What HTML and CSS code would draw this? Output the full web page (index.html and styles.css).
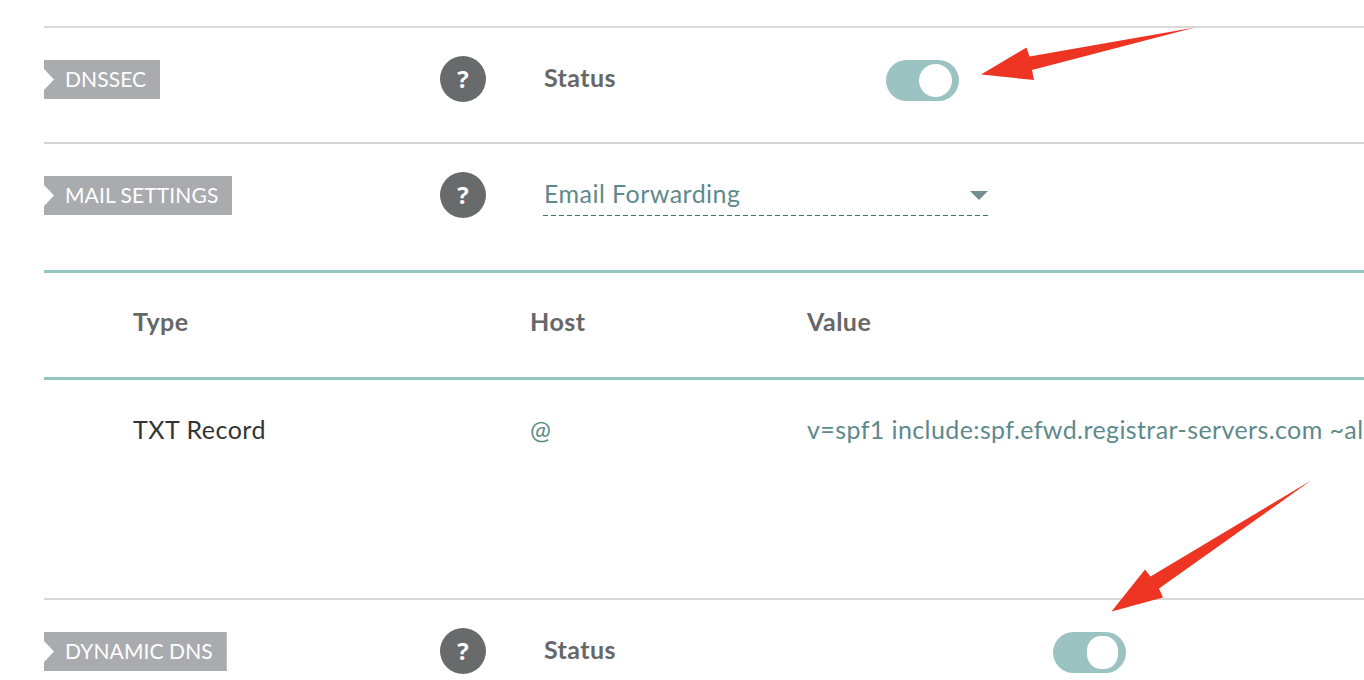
FILE: index.html
```html
<!DOCTYPE html>
<html lang="en">
<head>
<meta charset="utf-8">
<title>Advanced DNS</title>
<link rel="stylesheet" href="styles.css">
</head>
<body>
<main class="page">
  <section class="row row-dnssec">
    <div class="label-col"><span class="tag">DNSSEC</span></div>
    <span class="help">?</span>
    <div class="status-field status-a"><strong class="status">Status</strong><span class="toggle"><span class="knob"></span></span></div>
  </section>
  <section class="row row-mail">
    <div class="label-col"><span class="tag">MAIL SETTINGS</span></div>
    <span class="help">?</span>
    <div class="select"><span>Email Forwarding</span><span class="caret"></span></div>
  </section>
  <section class="table">
    <div class="table-row table-head"><span class="c-type">Type</span><span class="c-host">Host</span><span class="c-value">Value</span></div>
    <div class="table-row table-body"><span class="c-type dark">TXT Record</span><span class="c-host">@</span><span class="c-value">v=spf1 include:spf.efwd.registrar-servers.com ~all</span></div>
  </section>
  <section class="row row-ddns">
    <div class="label-col"><span class="tag">DYNAMIC DNS</span></div>
    <span class="help">?</span>
    <div class="status-field status-b"><strong class="status">Status</strong><span class="toggle"><span class="knob knob-square"></span></span></div>
  </section>
</main>
<svg class="arrows" width="1364" height="680" viewBox="0 0 1364 680" aria-hidden="true">
  <polygon fill="#ee3524" points="981,74.5 1026.5,47.5 1029.5,56.5 1195,27.5 1032,70 1034,80"/>
  <polygon fill="#ee3524" points="1111.5,611.5 1145,569.5 1150.5,576.5 1311,480.5 1159,588.5 1163,597.5"/>
</svg>
</body>
</html>
```
FILE: styles.css
```css
* { box-sizing: border-box; }
html, body { margin: 0; height: 680px; overflow: hidden; background: #fff; }
body { position: relative; font-family: Lato, "Open Sans", sans-serif; color: #666769; }
.page { padding: 26px 0 0 44px; }
.row { display: flex; align-items: flex-start; border-top: 2px solid #d8d8d8; }
.row-dnssec { height: 116px; padding-top: 28px; }
.row-mail { height: 128px; padding-top: 28px; border-top-color: #d4d4d4; }
.row-ddns { height: 80px; padding-top: 28px; }
.label-col { width: 396px; flex: none; padding-top: 4px; }
.tag {
  display: inline-block; height: 39px; line-height: 37px; padding: 0 14px 0 21px;
  background: #a9abae; color: #fff; font-size: 21px; letter-spacing: .1px;
  clip-path: polygon(0 0, 100% 0, 100% 100%, 0 100%, 0 30px, 10px 19.5px, 0 9px);
}
.help {
  width: 46px; height: 46px; flex: none; border-radius: 50%; background: #696a6c; color: #fff;
  font: 700 24px/45px "Open Sans", sans-serif; text-align: center;
}
.status-field { display: flex; align-items: center; margin-left: 58px; height: 46px; }
.status { font-size: 25px; font-weight: 700; letter-spacing: .4px; width: 342px; flex: none; color: #666769; margin-bottom: 4px; }
.status-b .status { width: 509px; }
.toggle { display: flex; justify-content: flex-end; align-items: center; width: 73px; height: 41px; padding-right: 7px; border-radius: 21px; background: #9ac3c1; margin-top: 3px; }
.knob { width: 33px; height: 33px; border-radius: 50%; background: #fff; }
.knob-square { width: 31px; border-radius: 45%; margin-right: 1px; }
.select {
  display: flex; justify-content: space-between; align-items: center; width: 445px; height: 44px;
  margin-left: 57px; padding: 0 0 2px 1px;
  background: repeating-linear-gradient(90deg, #3d7276 0 5px, transparent 5px 8px) left bottom / 100% 1px no-repeat;
  color: #5e8a8c; font-size: 25px; letter-spacing: .45px;
}
.caret { width: 0; height: 0; margin: 5px 0 0; border: 9px solid transparent; border-top-color: #6f8f91; border-bottom: 0; }
.table { height: 328px; border-top: 3px solid #95c5c1; }
.table-row { display: flex; padding-left: 89px; }
.table-head { height: 107px; padding-top: 32px; line-height: 32px; border-bottom: 3px solid #95c5c1; font-size: 25px; font-weight: 700; letter-spacing: .5px; }
.table-body { padding-top: 33px; line-height: 32px; font-size: 25px; color: #5e8a8c; white-space: nowrap; letter-spacing: .4px; }
.c-type { width: 397px; flex: none; }
.c-host { width: 277px; flex: none; }
.dark { color: #333; letter-spacing: .5px; }
.arrows { position: absolute; left: 0; top: 0; pointer-events: none; }
```
